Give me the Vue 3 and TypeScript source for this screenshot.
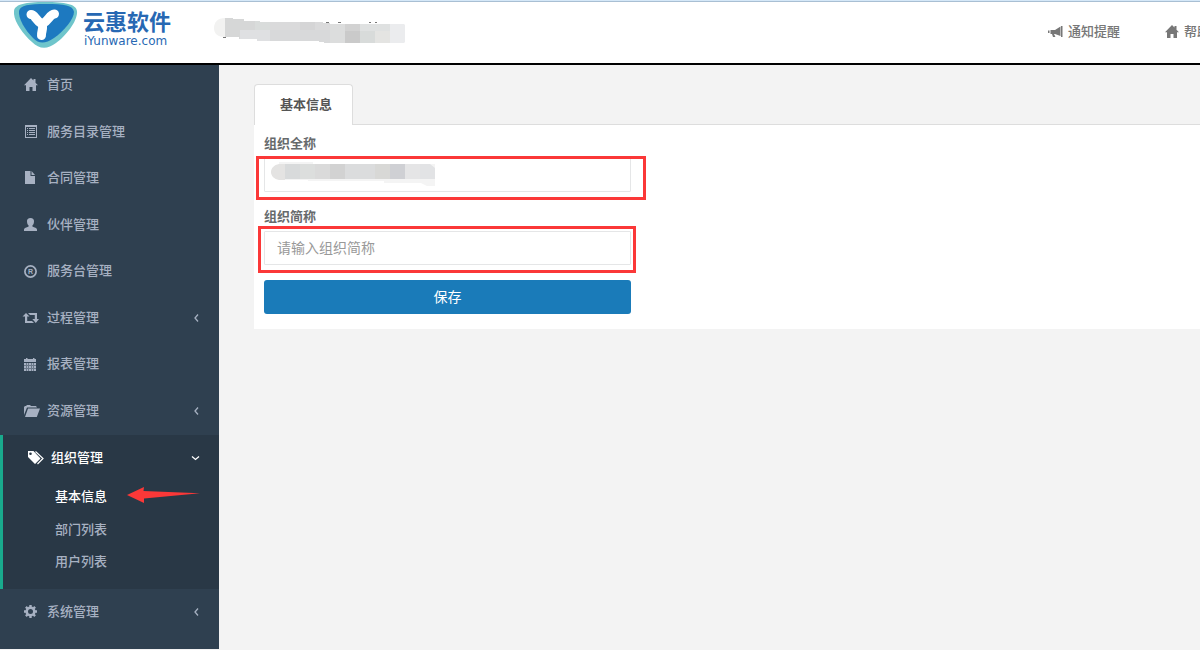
<script setup lang="ts">
import { ref } from 'vue'

interface MenuItem {
  icon: string
  label: string
  expandable?: boolean
  children?: string[]
}

const menu: MenuItem[] = [
  { icon: 'home', label: '首页' },
  { icon: 'list', label: '服务目录管理' },
  { icon: 'file', label: '合同管理' },
  { icon: 'user', label: '伙伴管理' },
  { icon: 'registered', label: '服务台管理' },
  { icon: 'retweet', label: '过程管理', expandable: true },
  { icon: 'calendar', label: '报表管理' },
  { icon: 'folder', label: '资源管理', expandable: true },
  { icon: 'tags', label: '组织管理', expandable: true, children: ['基本信息', '部门列表', '用户列表'] },
  { icon: 'cog', label: '系统管理', expandable: true },
]

const currentPage = ref('基本信息')
const fullName = ref('')
const shortName = ref('')
</script>

<template>
  <div class="page">
    <header class="topbar">
      <a class="logo" href="#">
        <svg class="logo-mark" width="64" height="46" viewBox="0 0 64 46" aria-hidden="true">
          <path d="M0 9C1 2 12 0 31 0C51 0 62 2 63 9C64 18 53 33 42 41C33 48 25 47 18 40C8 31 -1 18 0 9Z" fill="#6fc5cb" />
          <path d="M5 9C6 3 15 2 32 2C50 2 59 3 60 10C60 17 50 29 40 36C31 42 25 42 19 36C11 28 4 16 5 9Z" fill="#1d79c0" />
          <path d="M17 12.500C21 12.500 21 18 28 22C35 19 35 12.500 40.500 12M28 22C30 26 27 30 27.500 33.500" fill="none" stroke="#fff" stroke-width="9" stroke-linecap="round" stroke-linejoin="round" />
        </svg>
        <span class="logo-text">
          <strong>云惠软件</strong>
          <span>iYunware.com</span>
        </span>
      </a>
      <svg class="company" width="192" height="28" viewBox="0 0 192 28" aria-hidden="true">
        <path d="M11 1C4 1 0 5 0 11S4 20 11 20Z" fill="#f2f2f1" />
        <path d="M11 1H19V2H30V4H41V21H26V22H25V20H11Z" fill="#d6d7d7" />
        <path d="M26 13H56V24H43V22H26Z" fill="#dfe0e2" />
        <path d="M41 4H46V5H56V13H41Z" fill="#d9dcdb" />
        <path d="M56 5H109V6H116V13H56Z" fill="#dadadb" />
        <path d="M56 13H116V26H110V25H105V24H56Z" fill="#d8d9da" />
        <path d="M86 5H101V13H86Z" fill="#d5d5d6" />
        <path d="M116 7H131V26H116Z" fill="#dcdddd" />
        <path d="M131 7H146V14H131Z" fill="#d2d2d2" />
        <path d="M131 14H146V26H131Z" fill="#cacaca" />
        <path d="M146 7H176V14H146Z" fill="#dfe1e1" />
        <path d="M146 14H161V26H146Z" fill="#d8dbda" />
        <path d="M161 14H176V26H161Z" fill="#e4e4e2" />
        <path d="M176 7H190L191 8V25L190 26H176Z" fill="#ebecee" />
        <path d="M9 20.500H12M112 5.500H115M124 5.500H127M155 5.500H157M161 5.500H163" stroke="#777" />
      </svg>
      <nav class="top-links">
        <a href="#">
          <svg width="16" height="14" viewBox="0 0 16 14" aria-hidden="true">
            <path d="M13 1H14.500V12H13ZM12.500 1.500V11L7 9H6L7.500 12H5L4 9H2.500V5H7ZM0 5.500H1.500V8H0Z" fill="currentColor" />
          </svg>
          通知提醒
        </a>
        <a href="#">
          <svg width="16" height="14" viewBox="0 0 16 14" aria-hidden="true">
            <path d="M8 0L1 7.300H3V13H6.500V9H9.500V13H13V7.300H15L12.500 4.700V1H10.500V2.600Z" fill="currentColor" />
          </svg>
          帮助
        </a>
      </nav>
    </header>

    <div class="body">
      <aside class="sidebar">
        <ul class="menu">
          <li v-for="item in menu" :key="item.label" :class="{ active: item.children }">
            <a class="menu-link" href="#">
              <svg class="menu-icon" width="16" height="14" viewBox="0 0 16 14" fill="currentColor" aria-hidden="true">
                <path v-if="item.icon === 'home'" d="M8 0L1 7.300H3V13H6.500V9H9.500V13H13V7.300H15L12.500 4.700V1H10.500V2.600Z" />
                <g v-else-if="item.icon === 'list'">
                  <path d="M2 0H14V13H2ZM3 2V12H13V2Z" fill-rule="evenodd" />
                  <path d="M4 3.500H5M6 3.500H12M4 5.500H5M6 5.500H12M4 7.500H5M6 7.500H12M4 9.500H5M6 9.500H12" stroke="currentColor" />
                </g>
                <path v-else-if="item.icon === 'file'" d="M2 0H7.500V5H12V13H2ZM8.500 0L12 4H8.500Z" />
                <path v-else-if="item.icon === 'user'" d="M7.500 0C9.800 0 11.200 1.300 11 3.500C10.900 5.500 10.400 6.500 9.400 7.500V8.500C11.500 9.500 14 10 14 11.500V13H1V11.500C1 10 3.500 9.500 5.600 8.500V7.500C4.600 6.500 4.100 5.500 4 3.500C3.800 1.300 5.200 0 7.500 0Z" />
                <g v-else-if="item.icon === 'registered'">
                  <circle cx="7.500" cy="6.500" r="5.600" fill="none" stroke="currentColor" stroke-width="1.700" />
                  <text class="registered-letter" x="7.500" y="9" text-anchor="middle">R</text>
                </g>
                <path v-else-if="item.icon === 'retweet'" d="M3 2L6.500 5.500H4.200V10H9L11 12H2V5.500H-0.500ZM5 2H14V8H16L12.800 12L9.300 8H11.800V4H7Z" />
                <path v-else-if="item.icon === 'calendar'" d="M1 1H3V0H4.500V1H10V0H11.500V1H13V4H1ZM1 5H13V13H1ZM3 5V13H3.500V5ZM5.500 5V13H6V5ZM8 5V13H8.500V5ZM10.500 5V13H11V5ZM1 7.300V7.700H13V7.300ZM1 10V10.400H13V10Z" fill-rule="evenodd" />
                <path v-else-if="item.icon === 'folder'" d="M1 11V3L2 2H3L4 1H7L8 2H13L14 3.500H4L1 11ZM5 4.500H17L13.800 13H2Z" />
                <g v-else-if="item.icon === 'tags'">
                  <path d="M1 0H6.500L13.500 7.500L8 13L1 6ZM3.500 1.500A1.300 1.300 0 1 0 3.500 4.100A1.300 1.300 0 1 0 3.500 1.500Z" fill-rule="evenodd" />
                  <path d="M8.500 0.500L16 7.500L10.500 13" fill="none" stroke="currentColor" stroke-width="1.200" />
                </g>
                <g v-else>
                  <circle cx="7.500" cy="6.500" r="3.800" fill="none" stroke="currentColor" stroke-width="2.600" />
                  <path d="M7.500 0V3M7.500 10V13M1 6.500H4M11 6.500H14M2.900 1.900L5 4M10 9L12.100 11.100M12.100 1.900L10 4M5 9L2.900 11.100" stroke="currentColor" stroke-width="2.400" />
                </g>
              </svg>
              <span>{{ item.label }}</span>
              <svg v-if="item.expandable" class="chevron" width="10" height="10" viewBox="0 0 10 10" aria-hidden="true">
                <path :d="item.children ? 'M1 3.500L4.500 6.500L8 3.500' : 'M7 1.500L4 5L7 8.500'" fill="none" stroke="currentColor" stroke-width="1.300" />
              </svg>
            </a>
            <ul v-if="item.children" class="submenu">
              <li v-for="child in item.children" :key="child">
                <a href="#" :class="{ current: child === currentPage }" @click.prevent="currentPage = child">{{ child }}</a>
                <svg v-if="child === '基本信息'" class="pointer" width="74" height="18" viewBox="0 0 74 18" aria-hidden="true">
                  <path d="M0 9L17 1L16.500 5L73 7.300L17 12.500V17Z" fill="#fb3838" />
                </svg>
              </li>
            </ul>
          </li>
        </ul>
      </aside>

      <main class="content">
        <div class="tabs" role="tablist">
          <button class="tab" type="button" role="tab" aria-selected="true">基本信息</button>
        </div>
        <section class="panel">
          <form class="form" @submit.prevent>
            <div class="field">
              <label for="full-name">组织全称</label>
              <div class="control">
                <input id="full-name" v-model="fullName" type="text" />
                <svg class="masked" width="165" height="24" viewBox="0 0 165 24" aria-hidden="true">
                  <path d="M8 0H42V2H164V24H156L150 21H113V19H37V18H8Z" fill="#f4f4f4" />
                  <path d="M14 2H8C3 3 0 6 0 10S3 17 8 18H14Z" fill="#e4e3e2" />
                  <path d="M14 2H29V17H14Z" fill="#d8dadb" />
                  <path d="M29 2H44V17H29Z" fill="#dcdedd" />
                  <path d="M44 2H59V17H44Z" fill="#dadada" />
                  <path d="M59 2H74V17H59Z" fill="#d2d2d2" />
                  <path d="M74 2H104V17H74Z" fill="#dbdcdd" />
                  <path d="M104 2H119V17H104Z" fill="#d8d8d6" />
                  <path d="M119 2H134V17H119Z" fill="#cfd0d4" />
                  <path d="M134 2H149V17H134Z" fill="#e5e5e6" />
                  <path d="M149 2H159L164 6V17H149Z" fill="#e2e3e5" />
                </svg>
                <span class="highlight highlight-full"></span>
              </div>
            </div>
            <div class="field">
              <label for="short-name">组织简称</label>
              <div class="control">
                <input id="short-name" v-model="shortName" type="text" placeholder="请输入组织简称" />
                <span class="highlight highlight-short"></span>
              </div>
            </div>
            <button class="save" type="submit">保存</button>
          </form>
        </section>
      </main>
    </div>
  </div>
</template>

<style>
body {
  margin: 0;
  overflow-x: hidden;
  background: #f3f3f3;
}
</style>

<style scoped>
* {
  box-sizing: border-box;
}

.page {
  overflow: hidden;
  color: #676a6c;
  font: 13px/1.43 "Liberation Sans", "Noto Sans CJK SC", sans-serif;
}

a {
  color: inherit;
  text-decoration: none;
}

ul {
  margin: 0;
  padding: 0;
  list-style: none;
}

.topbar {
  display: flex;
  align-items: flex-start;
  height: 65px;
  padding-left: 14px;
  border-top: 1px solid #d5e8f8;
  border-bottom: 2px solid #000;
  background: #fff;
  box-shadow: inset 0 1px #a9bfd3;
}

.logo {
  display: flex;
  gap: 5px;
  width: 200px;
  padding-top: 1px;
  color: #2768b3;
}

.logo-text {
  display: flex;
  flex-direction: column;
  padding-top: 9px;
  font-size: 12px;
  line-height: 12px;
}

.logo-text strong {
  font-size: 22px;
  line-height: 24px;
}

.logo-text span {
  padding-left: 1px;
  font-family: "DejaVu Sans", sans-serif;
}

.company {
  margin-top: 16px;
}

.top-links {
  display: flex;
  gap: 44px;
  margin: 22px -10px 0 auto;
  color: #777;
  font-weight: 500;
  white-space: nowrap;
}

.top-links a {
  display: flex;
  align-items: center;
  gap: 4px;
}

.body {
  display: flex;
  align-items: flex-start;
}

.sidebar {
  flex: none;
  width: 219px;
  min-height: calc(100vh - 66px);
  background: #2f4050;
  color: #a7b1c2;
  font-weight: 500;
}

.menu {
  margin-top: -3px;
}

.menu-link {
  display: flex;
  align-items: center;
  gap: 8px;
  padding: 14px 18px 14px 23px;
}

.menu-icon {
  flex: none;
  overflow: visible;
}

.registered-letter {
  font: bold 7px "Liberation Sans", sans-serif;
}

.chevron {
  margin-left: auto;
}

.active {
  border-left: 3px solid #19aa8d;
  background: #293846;
}

.active > .menu-link {
  padding-left: 24px;
  color: #fff;
}

.submenu {
  padding-bottom: 10px;
}

.submenu li {
  position: relative;
}

.submenu a {
  display: block;
  padding: 7px 10px 7px 52px;
}

.submenu .current {
  color: #fff;
}

.pointer {
  position: absolute;
  top: 5px;
  left: 124px;
}

.content {
  flex: 1;
  min-width: 0;
  padding: 19px 0 0 35px;
}

.tabs {
  display: flex;
  border-bottom: 1px solid #ddd;
}

.tab {
  height: 41px;
  margin-bottom: -1px;
  padding: 0 20px 0 25px;
  border: 1px solid #ddd;
  border-bottom: 0;
  border-radius: 4px 4px 0 0;
  background: #fff;
  color: #555;
  font: inherit;
  font-weight: 600;
}

.panel {
  padding: 10px 10px 15px;
  background: #fff;
}

.form {
  max-width: 367px;
}

.field {
  margin-bottom: 15px;
}

.field label {
  display: block;
  margin-bottom: 5px;
  font-weight: 600;
  line-height: 18px;
}

.field + .field label {
  line-height: 19px;
}

.control {
  position: relative;
}

.control input {
  display: block;
  width: 100%;
  height: 34px;
  padding: 6px 12px;
  border: 1px solid #e5e6e7;
  border-radius: 1px;
  background: #fff;
  color: inherit;
  font: inherit;
  font-size: 14px;
}

.control input::placeholder {
  color: #999;
  opacity: 1;
}

.masked {
  position: absolute;
  top: 4px;
  left: 7px;
}

.highlight {
  position: absolute;
  border: 3px solid #fb3838;
  pointer-events: none;
}

.highlight-full {
  inset: -2px -15px -8px -8px;
}

.highlight-short {
  inset: -5px -5px -8px -6px;
}

.save {
  display: block;
  width: 100%;
  height: 34px;
  border: 0;
  border-radius: 3px;
  background: #1a7bb9;
  color: #fff;
  font: inherit;
  font-size: 14px;
}
</style>
